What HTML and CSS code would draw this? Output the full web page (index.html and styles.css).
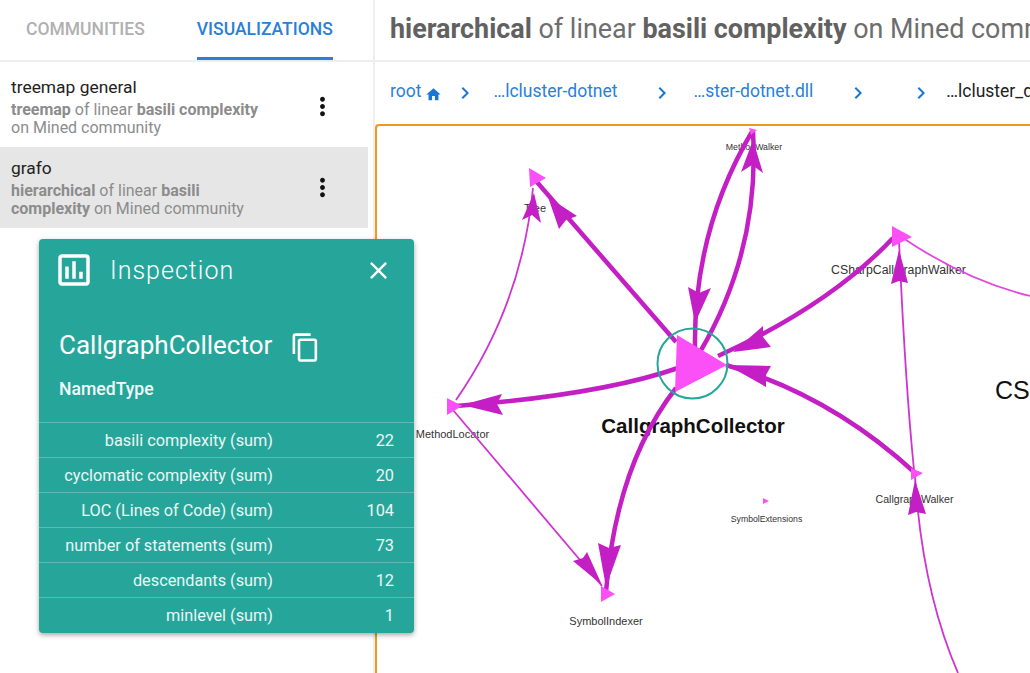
FILE: index.html
```html
<!DOCTYPE html>
<html lang="en">

<head>
    <meta charset="UTF-8">
    <meta name="viewport" content="width=device-width, initial-scale=1.0">
    <title>Visualizations</title>
    <link rel="stylesheet" href="styles.css">
</head>

<body>
    <aside class="sidebar">
        <nav class="tabs">
            <div class="tab">COMMUNITIES</div>
            <div class="tab tab-active">VISUALIZATIONS</div>
        </nav>
        <ul class="vis-list">
            <li class="vis-item">
                <div class="vis-text">
                    <div class="vis-name">treemap general</div>
                    <div class="vis-desc"><b>treemap</b> of linear <b>basili complexity</b><br>on Mined community</div>
                </div>
                <svg class="more" viewBox="0 0 24 24"><path d="M12 8c1.1 0 2-.9 2-2s-.9-2-2-2-2 .9-2 2 .9 2 2 2zm0 2c-1.1 0-2 .9-2 2s.9 2 2 2 2-.9 2-2-.9-2-2-2zm0 6c-1.1 0-2 .9-2 2s.9 2 2 2 2-.9 2-2-.9-2-2-2z"/></svg>
            </li>
            <li class="vis-item vis-selected">
                <div class="vis-text">
                    <div class="vis-name">grafo</div>
                    <div class="vis-desc"><b>hierarchical</b> of linear <b>basili</b><br><b>complexity</b> on Mined community</div>
                </div>
                <svg class="more" viewBox="0 0 24 24"><path d="M12 8c1.1 0 2-.9 2-2s-.9-2-2-2-2 .9-2 2 .9 2 2 2zm0 2c-1.1 0-2 .9-2 2s.9 2 2 2 2-.9 2-2-.9-2-2-2zm0 6c-1.1 0-2 .9-2 2s.9 2 2 2 2-.9 2-2-.9-2-2-2z"/></svg>
            </li>
        </ul>
    </aside>

    <main class="content">
        <header class="title-bar">
            <h1 class="title"><b>hierarchical</b> of linear <b>basili complexity</b> on Mined community</h1>
        </header>
        <div class="crumbs">
            <a class="crumb crumb-root">root
                <svg class="home" viewBox="0 0 24 24"><path d="M10 20v-6h4v6h5v-8h3L12 3 2 12h3v8z"/></svg>
            </a>
            <svg class="chev chev-1" viewBox="0 0 24 24"><path d="M10 6L8.59 7.41 13.17 12l-4.58 4.59L10 18l6-6z"/></svg>
            <a class="crumb crumb-a">…lcluster-dotnet</a>
            <svg class="chev chev-2" viewBox="0 0 24 24"><path d="M10 6L8.59 7.41 13.17 12l-4.58 4.59L10 18l6-6z"/></svg>
            <a class="crumb crumb-b">…ster-dotnet.dll</a>
            <svg class="chev chev-3" viewBox="0 0 24 24"><path d="M10 6L8.59 7.41 13.17 12l-4.58 4.59L10 18l6-6z"/></svg>
            <svg class="chev chev-4" viewBox="0 0 24 24"><path d="M10 6L8.59 7.41 13.17 12l-4.58 4.59L10 18l6-6z"/></svg>
            <span class="crumb crumb-last">…lcluster_dotnet</span>
        </div>
        <section class="graph">
            <svg class="graph-svg" viewBox="375 124 655 549">
                <!-- labels sit under the edges -->
                <g class="labels">
                    <text x="754" y="150" font-size="8.800">MethodWalker</text>
                    <text x="535" y="212" font-size="11">Tree</text>
                    <text x="898.500" y="274" font-size="12.300">CSharpCallGraphWalker</text>
                    <text x="452.500" y="438" font-size="11">MethodLocator</text>
                    <text x="693" y="433" font-size="20.500" font-weight="bold" class="label-main">CallgraphCollector</text>
                    <text x="914.500" y="503" font-size="10.600">CallgraphWalker</text>
                    <text x="766.500" y="522" font-size="8.700">SymbolExtensions</text>
                    <text x="606" y="625" font-size="11">SymbolIndexer</text>
                    <text x="995" y="399" font-size="25" class="label-cs">CS</text>
                </g>

                <g class="edges">
                    <path class="thick" d="M676 342 L536 181"/>
                    <path class="thin" d="M456 400 Q522 305 533 188"/>
                    <path class="thick" d="M753 130 Q693 230 695 350"/>
                    <path class="thick" d="M700 352 Q760 250 753 132"/>
                    <path class="thick" d="M893 238 Q830 305 718 356"/>
                    <path class="thick" d="M914 472 Q830 395 726 365"/>
                    <path class="thick" d="M678 368 Q600 395 456 406"/>
                    <path class="thick" d="M676 388 Q616 465 606 592"/>
                    <path class="thin" d="M453 410 L602 586"/>
                    <path class="thin" d="M914 470 Q905 380 899 240"/>
                    <path class="thin" d="M958 673 Q922 590 915 476"/>
                    <path class="thin pale" d="M903 238 Q965 280 1030 296"/>
                </g>

                <g class="heads">
                    <polygon points="548,197 577,216 566,220 559,229"/>
                    <polygon points="534,193 522,220 532,215 541,223"/>
                    <polygon points="695,323 688,287 699,293 711,288"/>
                    <polygon points="753,140 741,172 752,165 763,173"/>
                    <polygon points="733,352 763,326 763,337 771,347"/>
                    <polygon points="727,365 771,366 766,375 766,387"/>
                    <polygon points="462,405 502,394 497,404 503,415"/>
                    <polygon points="606,587 598,543 609,548 621,545"/>
                    <polygon points="602,585 573,561 583,558 587,552"/>
                    <polygon points="899,250 891,284 899,281 908,283"/>
                    <polygon points="915,480 908,515 916,512 926,514"/>
                </g>

                <g class="nodes">
                    <polygon points="677,335 727,365 675,392"/>
                    <polygon points="529,168 546,178 530,187"/>
                    <polygon points="749,128 757,130 751,135"/>
                    <polygon points="447,398 462,406 447,415"/>
                    <polygon points="601,586 615,594 601,602"/>
                    <polygon points="763,498 769,501 763,504"/>
                    <polygon points="892,226 912,237 892,247"/>
                    <polygon points="911,468 923,473 911,480"/>
                </g>

                <circle class="focus" cx="692.500" cy="363.500" r="35"/>
            </svg>
        </section>
    </main>

    <section class="inspection">
        <div class="insp-head">
            <svg class="insp-icon" viewBox="0 0 24 24"><path d="M19 3H5c-1.100 0-2 .9-2 2v14c0 1.100.9 2 2 2h14c1.100 0 2-.9 2-2V5c0-1.100-.9-2-2-2zm0 16H5V5h14v14zM7 10h2v7H7zm4-3h2v10h-2zm4 6h2v4h-2z"/></svg>
            <span class="insp-title">Inspection</span>
            <svg class="insp-close" viewBox="0 0 24 24"><path d="M19 6.410L17.590 5 12 10.590 6.410 5 5 6.410 10.590 12 5 17.590 6.410 19 12 13.410 17.590 19 19 17.590 13.410 12z"/></svg>
        </div>
        <div class="insp-name">
            <span>CallgraphCollector</span>
            <svg class="insp-copy" viewBox="0 0 24 24"><path d="M16 1H4c-1.100 0-2 .9-2 2v14h2V3h12V1zm3 4H8c-1.100 0-2 .9-2 2v14c0 1.100.9 2 2 2h11c1.100 0 2-.9 2-2V7c0-1.100-.9-2-2-2zm0 16H8V7h11v14z"/></svg>
        </div>
        <div class="insp-type">NamedType</div>
        <div class="metric"><span class="metric-name">basili complexity (sum)</span><span class="metric-value">22</span></div>
        <div class="metric"><span class="metric-name">cyclomatic complexity (sum)</span><span class="metric-value">20</span></div>
        <div class="metric"><span class="metric-name">LOC (Lines of Code) (sum)</span><span class="metric-value">104</span></div>
        <div class="metric"><span class="metric-name">number of statements (sum)</span><span class="metric-value">73</span></div>
        <div class="metric"><span class="metric-name">descendants (sum)</span><span class="metric-value">12</span></div>
        <div class="metric"><span class="metric-name">minlevel (sum)</span><span class="metric-value">1</span></div>
    </section>
</body>

</html>
```

FILE: styles.css
```css
* {
    box-sizing: border-box;
}

html,
body {
    height: 100%;
}

body {
    margin: 0;
    display: flex;
    overflow: hidden;
    background-color: #fff;
    font-family: Roboto, "Liberation Sans", sans-serif;
}

/* left column */
.sidebar {
    width: 375px;
    flex-shrink: 0;
    border-right: 2px solid #eeeeee;
}

.tabs {
    display: flex;
    height: 62px;
    padding-left: 26px;
    border-bottom: 2px solid #eeeeee;
}

.tab {
    font-size: 17.500px;
    font-weight: 500;
    line-height: 58px;
    height: 60px;
    color: #b0b0b0;
    margin-right: 52px;
    white-space: nowrap;
}

.tab-active {
    color: #2a7fd8;
    border-bottom: 3px solid #2a7fd8;
    height: 60px;
}

.vis-list {
    list-style: none;
    margin: 0;
    padding: 0;
    width: 368px;
}

.vis-item {
    display: flex;
    align-items: center;
    justify-content: space-between;
    height: 85px;
    padding: 4px 31px 0 11px;
}

.vis-selected {
    height: 81px;
    padding-top: 0;
    background-color: #e6e6e6;
}

.vis-name {
    font-size: 17.400px;
    line-height: 20px;
    color: #222;
    margin-bottom: 4px;
}

.vis-desc {
    font-size: 16px;
    line-height: 18px;
    color: #8c8c8c;
}

.vis-desc b {
    font-weight: 700;
}

.more {
    width: 29px;
    height: 29px;
    fill: #111;
}

/* right column */
.content {
    flex: 1;
    min-width: 0;
    display: flex;
    flex-direction: column;
    overflow: hidden;
}

.title-bar {
    height: 62px;
    padding-left: 15px;
    border-bottom: 2px solid #eeeeee;
    overflow: hidden;
}

.title {
    margin: 0;
    font-size: 26.900px;
    font-weight: 400;
    line-height: 59px;
    color: #6e6e6e;
    white-space: nowrap;
}

.title b {
    font-weight: 700;
    color: #616161;
}

.crumbs {
    height: 62px;
    display: flex;
    align-items: center;
    padding-left: 15px;
    font-size: 17.500px;
    white-space: nowrap;
    overflow: hidden;
}

.crumb {
    color: #2a7fd8;
    margin-bottom: 4px;
}

.crumb-root {
    display: flex;
    align-items: center;
    gap: 4px;
}

.home {
    width: 17px;
    height: 17px;
    fill: #1976d2;
    margin-top: 6px;
}

.chev {
    width: 24px;
    height: 24px;
    fill: #1976d2;
    flex-shrink: 0;
}

.chev-1 {
    margin-left: 11px;
    margin-right: 16px;
}

.chev-2 {
    margin-left: 32px;
    margin-right: 20px;
}

.chev-3 {
    margin-left: 33px;
}

.chev-4 {
    margin-left: 39px;
    margin-right: 13px;
}

.crumb-last {
    color: #222;
}

.graph {
    flex: 1;
    min-height: 0;
    border-top: 2px solid #ef9a1a;
    border-left: 2px solid #ef9a1a;
    border-top-left-radius: 4px;
    overflow: hidden;
    position: relative;
}

.graph-svg {
    position: absolute;
    left: -2px;
    top: -2px;
    width: 655px;
    height: 549px;
}

.labels text {
    font-family: "Liberation Sans", sans-serif;
    fill: #333;
    text-anchor: middle;
}

.labels .label-main {
    fill: #111;
}

.labels .label-cs {
    fill: #111;
    text-anchor: start;
}

.edges path {
    fill: none;
    stroke: #c41fc4;
}

.edges .thick {
    stroke-width: 4.500;
}

.edges .thin {
    stroke-width: 1.800;
    stroke: #d034d0;
}

.edges .pale {
    stroke: #e048e0;
}

.heads polygon {
    fill: #c41fc4;
}

.nodes polygon {
    fill: #fa50f5;
}

.focus {
    fill: none;
    stroke: #26a69a;
    stroke-width: 2;
}

/* floating inspection card */
.inspection {
    position: absolute;
    left: 39px;
    top: 239px;
    width: 375px;
    height: 394px;
    background-color: #26a69a;
    color: #fff;
    border-radius: 4px;
    box-shadow: 0 2px 5px rgba(0, 0, 0, 0.35);
}

.insp-head {
    display: flex;
    align-items: center;
    height: 62px;
    padding: 0 21px 0 14px;
}

.insp-icon {
    width: 42px;
    height: 42px;
    fill: #fff;
}

.insp-title {
    flex: 1;
    margin-left: 15px;
    font-size: 25px;
    font-weight: 300;
    letter-spacing: 1px;
}

.insp-close {
    width: 29px;
    height: 29px;
    fill: #fff;
}

.insp-name {
    display: flex;
    align-items: center;
    gap: 18px;
    margin-top: 26px;
    padding-left: 20px;
    font-size: 26px;
    height: 36px;
}

.insp-copy {
    width: 31px;
    height: 31px;
    margin-top: 5px;
    fill: #fff;
}

.insp-type {
    margin-top: 14px;
    padding-left: 20px;
    font-size: 17.600px;
    font-weight: 500;
    line-height: 24px;
    height: 45px;
    color: #f2fbfa;
}

.metric {
    display: flex;
    height: 35px;
    align-items: center;
    border-top: 1px solid rgba(255, 255, 255, 0.25);
    font-size: 16.300px;
    color: #eaf7f6;
}

.metric-name {
    width: 234px;
    text-align: right;
    white-space: nowrap;
}

.metric-value {
    width: 121px;
    text-align: right;
}
```
